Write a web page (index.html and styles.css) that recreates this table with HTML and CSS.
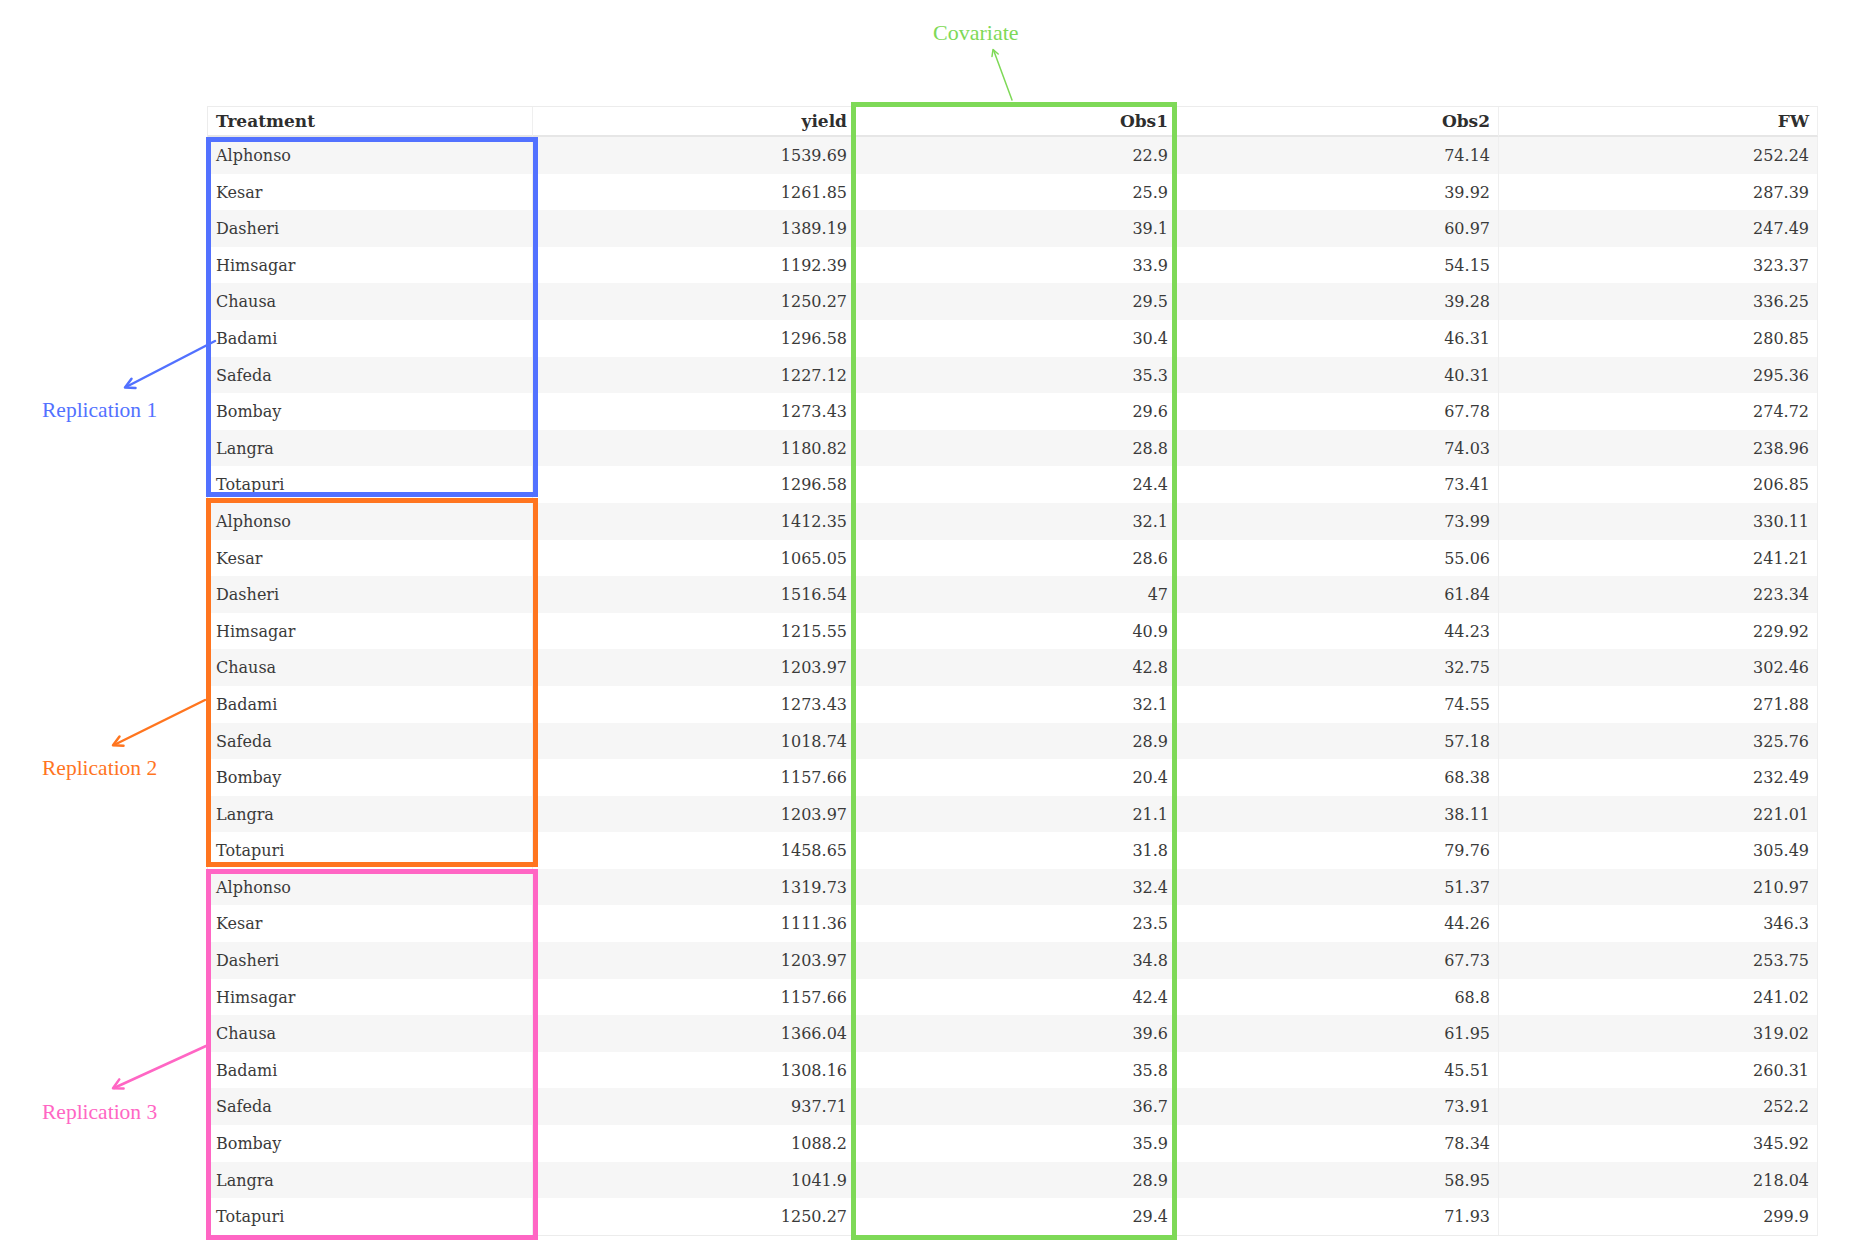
FILE: index.html
```html
<!DOCTYPE html>
<html lang="en">
<head>
<meta charset="utf-8">
<title>Treatment table with replications and covariate</title>
<link rel="stylesheet" href="styles.css">
</head>
<body>
<div class="figure">
  <table class="data">
    <colgroup>
      <col class="c1"><col class="c2"><col class="c3"><col class="c4"><col class="c5">
    </colgroup>
    <thead>
      <tr><th class="left">Treatment</th><th>yield</th><th>Obs1</th><th>Obs2</th><th>FW</th></tr>
    </thead>
    <tbody>
      <tr><td class="left">Alphonso</td><td>1539.69</td><td>22.9</td><td>74.14</td><td>252.24</td></tr>
      <tr><td class="left">Kesar</td><td>1261.85</td><td>25.9</td><td>39.92</td><td>287.39</td></tr>
      <tr><td class="left">Dasheri</td><td>1389.19</td><td>39.1</td><td>60.97</td><td>247.49</td></tr>
      <tr><td class="left">Himsagar</td><td>1192.39</td><td>33.9</td><td>54.15</td><td>323.37</td></tr>
      <tr><td class="left">Chausa</td><td>1250.27</td><td>29.5</td><td>39.28</td><td>336.25</td></tr>
      <tr><td class="left">Badami</td><td>1296.58</td><td>30.4</td><td>46.31</td><td>280.85</td></tr>
      <tr><td class="left">Safeda</td><td>1227.12</td><td>35.3</td><td>40.31</td><td>295.36</td></tr>
      <tr><td class="left">Bombay</td><td>1273.43</td><td>29.6</td><td>67.78</td><td>274.72</td></tr>
      <tr><td class="left">Langra</td><td>1180.82</td><td>28.8</td><td>74.03</td><td>238.96</td></tr>
      <tr><td class="left">Totapuri</td><td>1296.58</td><td>24.4</td><td>73.41</td><td>206.85</td></tr>
      <tr><td class="left">Alphonso</td><td>1412.35</td><td>32.1</td><td>73.99</td><td>330.11</td></tr>
      <tr><td class="left">Kesar</td><td>1065.05</td><td>28.6</td><td>55.06</td><td>241.21</td></tr>
      <tr><td class="left">Dasheri</td><td>1516.54</td><td>47</td><td>61.84</td><td>223.34</td></tr>
      <tr><td class="left">Himsagar</td><td>1215.55</td><td>40.9</td><td>44.23</td><td>229.92</td></tr>
      <tr><td class="left">Chausa</td><td>1203.97</td><td>42.8</td><td>32.75</td><td>302.46</td></tr>
      <tr><td class="left">Badami</td><td>1273.43</td><td>32.1</td><td>74.55</td><td>271.88</td></tr>
      <tr><td class="left">Safeda</td><td>1018.74</td><td>28.9</td><td>57.18</td><td>325.76</td></tr>
      <tr><td class="left">Bombay</td><td>1157.66</td><td>20.4</td><td>68.38</td><td>232.49</td></tr>
      <tr><td class="left">Langra</td><td>1203.97</td><td>21.1</td><td>38.11</td><td>221.01</td></tr>
      <tr><td class="left">Totapuri</td><td>1458.65</td><td>31.8</td><td>79.76</td><td>305.49</td></tr>
      <tr><td class="left">Alphonso</td><td>1319.73</td><td>32.4</td><td>51.37</td><td>210.97</td></tr>
      <tr><td class="left">Kesar</td><td>1111.36</td><td>23.5</td><td>44.26</td><td>346.3</td></tr>
      <tr><td class="left">Dasheri</td><td>1203.97</td><td>34.8</td><td>67.73</td><td>253.75</td></tr>
      <tr><td class="left">Himsagar</td><td>1157.66</td><td>42.4</td><td>68.8</td><td>241.02</td></tr>
      <tr><td class="left">Chausa</td><td>1366.04</td><td>39.6</td><td>61.95</td><td>319.02</td></tr>
      <tr><td class="left">Badami</td><td>1308.16</td><td>35.8</td><td>45.51</td><td>260.31</td></tr>
      <tr><td class="left">Safeda</td><td>937.71</td><td>36.7</td><td>73.91</td><td>252.2</td></tr>
      <tr><td class="left">Bombay</td><td>1088.2</td><td>35.9</td><td>78.34</td><td>345.92</td></tr>
      <tr><td class="left">Langra</td><td>1041.9</td><td>28.9</td><td>58.95</td><td>218.04</td></tr>
      <tr><td class="left">Totapuri</td><td>1250.27</td><td>29.4</td><td>71.93</td><td>299.9</td></tr>
    </tbody>
  </table>

  <div class="box box-blue"></div>
  <div class="box box-orange"></div>
  <div class="box box-pink"></div>
  <div class="box box-green"></div>

  <svg class="arrows" width="1855" height="1253" viewBox="0 0 1855 1253" aria-hidden="true">
    <g fill="none" stroke-linecap="round" stroke-linejoin="round">
      <g stroke="#5271ff" stroke-width="2.5">
        <line x1="215" y1="341" x2="126" y2="387"/>
        <polyline points="131.5,378.8 125,387.5 135.5,388"/>
      </g>
      <g stroke="#ff751f" stroke-width="2.5">
        <line x1="205" y1="700" x2="114" y2="745"/>
        <polyline points="119.5,736.6 113,745.3 123.5,745.8"/>
      </g>
      <g stroke="#ff66c4" stroke-width="2.5">
        <line x1="206" y1="1046" x2="114" y2="1088"/>
        <polyline points="119.3,1079.4 113,1088.3 123.6,1088.5"/>
      </g>
      <g stroke="#7ed957" stroke-width="1.5">
        <line x1="1012" y1="100" x2="993.5" y2="50"/>
        <polyline points="992,56.5 993,49.5 998.2,54"/>
      </g>
    </g>
  </svg>

  <span class="label label-cov">Covariate</span>
  <span class="label label-r1">Replication 1</span>
  <span class="label label-r2">Replication 2</span>
  <span class="label label-r3">Replication 3</span>
</div>
</body>
</html>
```

FILE: styles.css
```css
html, body {
  margin: 0;
  padding: 0;
  background: #ffffff;
}

.figure {
  position: relative;
  width: 1855px;
  height: 1253px;
  box-sizing: border-box;
  padding: 106px 0 0 207px;
  overflow: hidden;
}

/* ---------- table ---------- */
.data {
  width: 1611px;
  table-layout: fixed;
  border-collapse: separate;
  border-spacing: 0;
  border: 1px solid #ececec;
  border-right: none;
  font-family: "DejaVu Serif", "Liberation Serif", serif;
  font-size: 16px;
  color: #3a3a3a;
}

.data .c1 { width: 325px; }
.data .c2 { width: 323px; }
.data .c3 { width: 321px; }
.data .c4 { width: 322px; }
.data .c5 { width: 319px; }

.data th,
.data td {
  padding: 0 8px;
  text-align: right;
  white-space: nowrap;
  border-right: 1px solid #efefef;
  overflow: hidden;
}

.data th {
  padding-top: 1px;
  line-height: 27px;
  font-size: 17px;
  font-weight: bold;
  color: #2e2e2e;
  background: #ffffff;
  border-bottom: 2px solid #e6e6e6;
}

.data td {
  padding-top: 2px;
  line-height: 34.6px;
  background: #ffffff;
}

.data tbody tr:nth-child(odd) td {
  background: #f6f6f6;
}

.data .left {
  text-align: left;
}

/* ---------- annotation boxes ---------- */
.box {
  position: absolute;
  box-sizing: border-box;
  border: 5px solid transparent;
  pointer-events: none;
}

.box-blue {
  left: 206px;
  top: 137px;
  width: 332px;
  height: 360px;
  border-color: #5271ff;
}

.box-orange {
  left: 206px;
  top: 498px;
  width: 332px;
  height: 369px;
  border-color: #ff751f;
}

.box-pink {
  left: 206px;
  top: 869px;
  width: 332px;
  height: 371px;
  border-color: #ff66c4;
}

.box-green {
  left: 851px;
  top: 102px;
  width: 326px;
  height: 1138px;
  border-color: #7ed957;
}

/* ---------- arrows ---------- */
.arrows {
  position: absolute;
  left: 0;
  top: 0;
  pointer-events: none;
}

/* ---------- labels ---------- */
.label {
  position: absolute;
  font-family: "Liberation Serif", "Times New Roman", serif;
  font-size: 21.5px;
  line-height: 22px;
  white-space: nowrap;
}

.label-cov {
  left: 933px;
  top: 22px;
  font-size: 22px;
  color: #7ed957;
}

.label-r1 {
  left: 42px;
  top: 399px;
  color: #5271ff;
}

.label-r2 {
  left: 42px;
  top: 757px;
  color: #ff751f;
}

.label-r3 {
  left: 42px;
  top: 1101px;
  color: #ff66c4;
}
```
